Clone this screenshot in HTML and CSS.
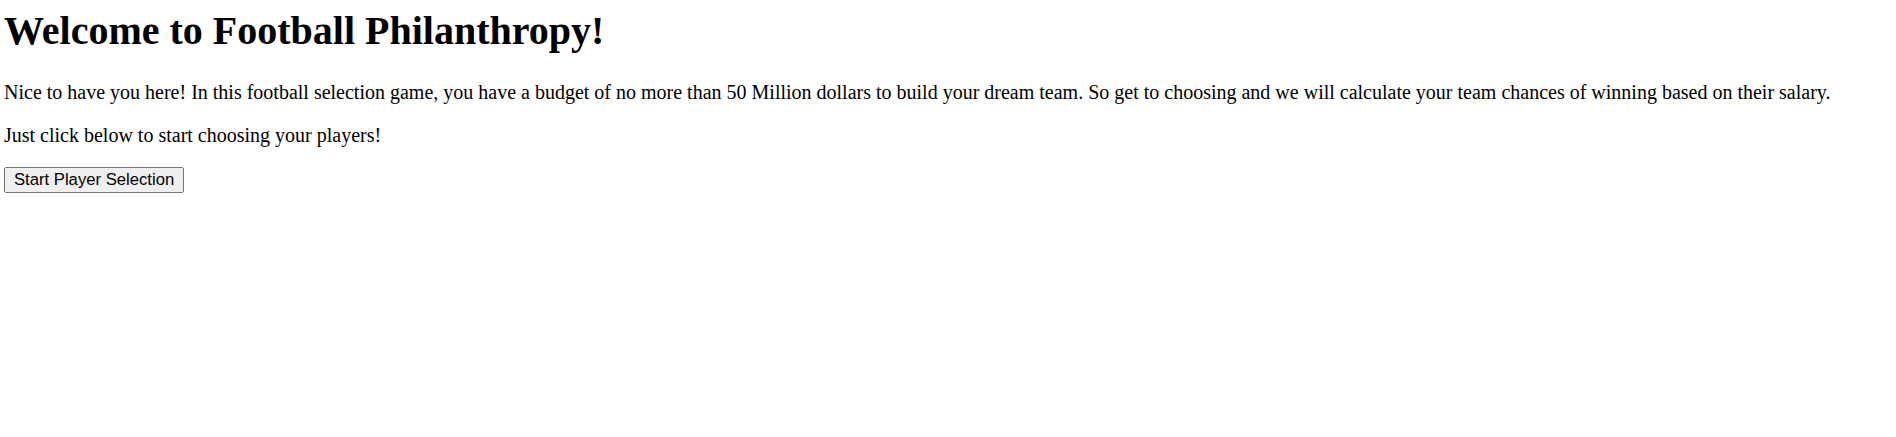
FILE: index.html
```html
<!DOCTYPE html>
<html lang="en">
<head>
<meta charset="utf-8">
<title>Football Philanthropy</title>
<link rel="stylesheet" href="styles.css">
</head>
<body>
<main class="page">
  <h1 class="title">Welcome to Football Philanthropy!</h1>
  <p class="text">Nice to have you here! In this football selection game, you have a budget of no more than 50 Million dollars to build your dream team. So get to choosing and we will calculate your team chances of winning based on their salary.</p>
  <p class="text">Just click below to start choosing your players!</p>
  <button class="start-btn" type="button">Start Player Selection</button>
</main>
</body>
</html>
```
FILE: styles.css
```css
html, body {
  margin: 0;
  padding: 0;
  background: #ffffff;
}

.page {
  padding: 7px 4px 0 4px;
  font-family: "Liberation Serif", "Times New Roman", serif;
  color: #000000;
}

.title {
  font-size: 40px;
  font-weight: bold;
  margin: 0 0 26.8px 0;
}

.text {
  font-size: 20px;
  margin: 0 0 20px 0;
}

.start-btn {
  font-family: "Liberation Sans", Arial, sans-serif;
  font-size: 16.67px;
  color: #000000;
  background: #efefef;
  border: 1px solid #767676;
  border-radius: 2px;
  padding: 2px 9px;
  margin: 0;
}
```
